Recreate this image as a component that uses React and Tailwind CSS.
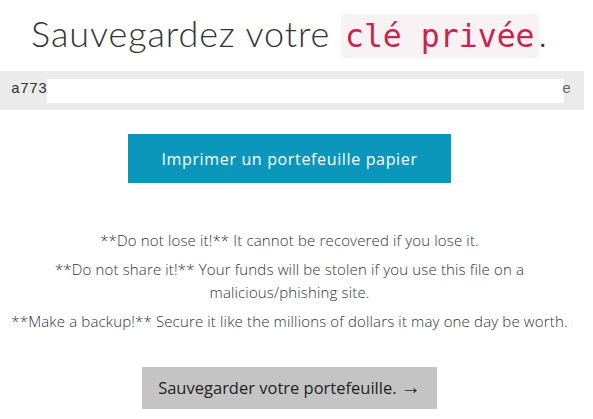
import React from "react";

function App() {
  return (
    <div className="w-[593px] h-[419px] bg-white overflow-hidden text-[#333]">
      <div className="w-[579px] flex flex-col items-center">
        <h1 className="mt-[12px] h-[42px] text-center font-['Lato',sans-serif] font-light text-[36px] leading-[42px] tracking-[0.9px] whitespace-nowrap">
          Sauvegardez votre{" "}
          <code className="font-['DejaVu_Sans_Mono',monospace] text-[31.5px] leading-none tracking-normal text-[#c7254e] bg-[#f9f2f4] px-[4px] py-[4px] rounded-[4px]">
            clé privée
          </code>
          .
        </h1>
      </div>

      <div className="w-[584px] h-[39px] mt-[17px] bg-[#ebebeb] flex items-center pl-[11px] font-['Liberation_Mono',monospace] text-[15px]">
        <span>a773</span>
        <div className="w-[517px] h-[24px] bg-white"></div>
        <span className="-ml-[2px] text-[#666]">e</span>
      </div>

      <div className="w-[579px] flex flex-col items-center">
        <button className="mt-[24px] w-[323px] h-[49px] bg-[#0b97bc] text-white font-['Open_Sans',sans-serif] text-[16px] tracking-[0.65px]">
          Imprimer un portefeuille papier
        </button>

        <div className="mt-[46px] w-[579px] text-center font-['Open_Sans',sans-serif] font-light text-[15px] leading-[23px] tracking-[0.15px] flex flex-col gap-[6px]">
          <p>**Do not lose it!** It cannot be recovered if you lose it.</p>
          <p>**Do not share it!** Your funds will be stolen if you use this file on a malicious/phishing site.</p>
          <p>**Make a backup!** Secure it like the millions of dollars it may one day be worth.</p>
        </div>

        <button className="mt-[34px] w-[295px] h-[42px] bg-[#c4c4c4] text-[#222] font-['Open_Sans',sans-serif] text-[16.5px]">
          Sauvegarder votre portefeuille. <span className="text-[20px] leading-none">→</span>
        </button>
      </div>
    </div>
  );
}

export default App;
